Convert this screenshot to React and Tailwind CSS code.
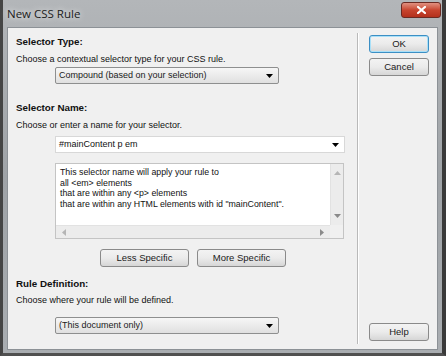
import React from 'react'

const font = { fontFamily: '"Liberation Sans", Arial, sans-serif' }

function Arrow({ dir = 'down', className = '' }) {
    // petit triangle plein
    const pts = {
        down: '0,0 7,0 3.5,4',
        up: '0,4 7,4 3.5,0',
        left: '4,0 4,7 0,3.5',
        right: '0,0 0,7 4,3.5',
    }[dir]
    const vertical = dir === 'down' || dir === 'up'
    return (
        <svg width={vertical ? 7 : 4} height={vertical ? 4 : 7} className={className}>
            <polygon points={pts} fill="currentColor" />
        </svg>
    )
}

function Select({ label, width }) {
    return (
        <div className={`ml-[39px] h-[17px] ${width} flex items-center justify-between px-[3px] border border-[#8e8f8f] rounded-[2px] bg-gradient-to-b from-[#f6f6f6] to-[#e0e0e0]`}>
            <span className="text-[9px] text-[#1a1a1a] leading-none">{label}</span>
            <Arrow className="text-black mr-[2px]" />
        </div>
    )
}

function Btn({ children, w, primary }) {
    return (
        <div
            className={`${w} h-[18px] flex items-center justify-center rounded-[3px] text-[9.5px] text-[#1a1a1a] bg-gradient-to-b from-[#f3f3f3] via-[#ebebeb] to-[#d6d6d6] ${
                primary ? 'border border-[#3c8fc4] shadow-[inset_0_0_0_1px_#a9e0f8]' : 'border border-[#8a8a8a]'
            }`}
        >
            {children}
        </div>
    )
}

export default function App() {
    return (
        <div style={font} className="w-[446px] h-[356px] flex flex-col bg-gradient-to-b from-[#b3b6b9] via-[#9fa3a7] to-[#a9adb1] border-l-[3px] border-r-[4px] border-b-[3px] border-l-[#454545] border-r-[#3a3a3a] border-b-[#505050]">
            {/* barre de titre */}
            <div className="relative h-[27px] flex items-center pl-[4px]">
                <span className="text-[11.5px] text-[#1b1b1b] [text-shadow:0_0_6px_#ffffff]" style={{ fontFamily: '"Open Sans", "Noto Sans", sans-serif' }}>
                    New CSS Rule
                </span>
                <div className="absolute right-[1px] top-[2px] w-[40px] h-[16px] rounded-[3px] border border-[#6b2a22] bg-gradient-to-b from-[#e09080] via-[#c8452f] to-[#b4301c] flex items-center justify-center">
                    <svg width="9" height="8" viewBox="0 0 9 8">
                        <path d="M1 1 L8 7 M8 1 L1 7" stroke="#ffffff" strokeWidth="2.2" strokeLinecap="square" />
                    </svg>
                </div>
            </div>

            {/* zone cliente */}
            <div className="flex-1 mx-[4px] mb-[3px] flex bg-[#f0f0f0] border border-[#8c9196]">
                {/* colonne gauche */}
                <div className="w-[349px] pl-[8px] flex flex-col text-[#111]">
                    <div className="mt-[7px] text-[9.8px] font-bold leading-[13px]">Selector Type:</div>
                    <div className="mt-[5px] text-[9px] leading-[13px]">Choose a contextual selector type for your CSS rule.</div>
                    <div className="mt-[1px]">
                        <Select label="Compound (based on your selection)" width="w-[224px]" />
                    </div>

                    <div className="mt-[17px] text-[9.8px] font-bold leading-[13px]">Selector Name:</div>
                    <div className="mt-[5px] text-[9px] leading-[13px]">Choose or enter a name for your selector.</div>
                    <div className="mt-[4px] ml-[39px] w-[290px] h-[17px] bg-white border border-[#d8d8d8] flex items-center justify-between px-[3px]">
                        <span className="text-[9px] leading-none">#mainContent p em</span>
                        <Arrow className="text-black mr-[2px]" />
                    </div>

                    {/* zone de description avec barres de défilement */}
                    <div className="mt-[10px] ml-[39px] w-[289px] h-[76px] border border-[#c4c4c4] bg-white flex flex-col">
                        <div className="flex flex-1 min-h-0">
                            <div className="flex-1 pl-[4px] pt-[3px] text-[8.8px] leading-[10.7px] text-[#111]">
                                <div>This selector name will apply your rule to</div>
                                <div>all &lt;em&gt; elements</div>
                                <div>that are within any &lt;p&gt; elements</div>
                                <div>that are within any HTML elements with id "mainContent".</div>
                            </div>
                            <div className="w-[13px] bg-[#ececec] border-l border-[#e2e2e2] flex flex-col items-center justify-between py-[7px]">
                                <Arrow dir="up" className="text-[#b5b5b5]" />
                                <Arrow dir="down" className="text-[#8a8a8a]" />
                            </div>
                        </div>
                        <div className="h-[13px] flex">
                            <div className="flex-1 bg-[#ececec] border-t border-[#e2e2e2] flex items-center justify-between px-[6px]">
                                <Arrow dir="left" className="text-[#b5b5b5]" />
                                <Arrow dir="right" className="text-[#8a8a8a]" />
                            </div>
                            <div className="w-[13px] bg-[#f0f0f0]" />
                        </div>
                    </div>

                    <div className="mt-[10px] ml-[84px] flex gap-[8px]">
                        <Btn w="w-[89px]">Less Specific</Btn>
                        <Btn w="w-[89px]">More Specific</Btn>
                    </div>

                    <div className="mt-[10px] text-[9.8px] font-bold leading-[13px]">Rule Definition:</div>
                    <div className="mt-[4px] text-[9px] leading-[13px]">Choose where your rule will be defined.</div>
                    <div className="mt-[10px]">
                        <Select label="(This document only)" width="w-[224px]" />
                    </div>
                </div>

                {/* séparateur */}
                <div className="w-[2px] my-[5px] border-l border-[#b9b9b9] border-r border-r-white" />

                {/* colonne droite */}
                <div className="flex-1 pl-[10px] pt-[7px] pb-[8px] flex flex-col">
                    <Btn w="w-[60px]" primary>OK</Btn>
                    <div className="mt-[5px]">
                        <Btn w="w-[60px]">Cancel</Btn>
                    </div>
                    <div className="mt-auto">
                        <Btn w="w-[60px]">Help</Btn>
                    </div>
                </div>
            </div>
        </div>
    )
}
